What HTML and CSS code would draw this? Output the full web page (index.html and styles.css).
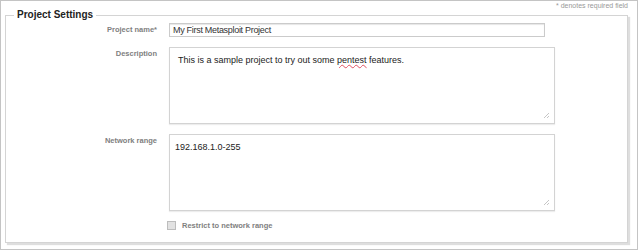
FILE: index.html
```html
<!DOCTYPE html>
<html lang="en">
<head>
    <meta charset="UTF-8">
    <title>Project Settings</title>
    <link rel="stylesheet" href="styles.css">
</head>
<body>
    <div class="frame">
        <p class="note">* denotes required field</p>
        <fieldset class="settings">
            <legend>Project Settings</legend>
            <div class="form-grid">
                <label class="field-label" for="project-name">Project name*</label>
                <div class="field">
                    <input class="text-input" id="project-name" type="text" value="My First Metasploit Project">
                </div>

                <label class="field-label">Description</label>
                <div class="field">
                    <div class="textbox textbox-desc" role="textbox">This is a sample project to try out some <span class="misspelt">pentest</span> features.</div>
                </div>

                <label class="field-label">Network range</label>
                <div class="field">
                    <div class="textbox" role="textbox">192.168.1.0-255</div>
                </div>

                <div class="field check-field">
                    <label class="check-row"><input class="check" type="checkbox"> Restrict to network range</label>
                </div>
            </div>
        </fieldset>
    </div>
</body>
</html>
```

FILE: styles.css
```css
*{
    margin: 0;
    padding: 0;
    box-sizing: border-box;
}
body {
    font-family: "Liberation Sans", Arial, sans-serif;
    background: #fff;
}
.frame {
    width: 638px;
    height: 250px;
    border: 1px solid #c4c4c4;
    padding: 0 9px 0 4px;
}
.note {
    height: 9px;
    font-size: 7px;
    line-height: 9px;
    color: #999;
    text-align: right;
}
.settings {
    min-width: 0;
    border: 1px solid #d4d4d4;
    box-shadow: 2px 2px 1px #dedede;
    padding: 3px 72px 12px 0;
}
.settings legend {
    margin-left: 8px;
    padding: 0 3px;
    font-size: 10px;
    line-height: 10px;
    font-weight: bold;
    color: #222;
}
.form-grid {
    display: grid;
    grid-template-columns: 151px 1fr;
    column-gap: 12px;
    row-gap: 10px;
}
.field-label {
    padding-top: 2px;
    font-size: 7.5px;
    line-height: 10px;
    font-weight: bold;
    color: #808080;
    text-align: right;
}
.text-input {
    display: block;
    width: calc(100% - 10px);
    height: 14px;
    padding: 0 3px;
    border: 1px solid #cbcbcb;
    box-shadow: inset 0 1px 1px #e6e6e6;
    font-family: "Liberation Sans", Arial, sans-serif;
    font-size: 9px;
    letter-spacing: -0.3px;
    color: #333;
    outline: none;
}
.textbox {
    position: relative;
    height: 77px;
    padding: 7px 5px;
    border: 1px solid #d3d3d3;
    box-shadow: 0 1px 1px #ededed;
    font-size: 9px;
    line-height: 11px;
    color: #222;
}
.textbox-desc {
    padding-left: 8px;
}
.textbox::after {
    content: "";
    position: absolute;
    right: 5px;
    bottom: 5px;
    width: 5px;
    height: 5px;
    background: linear-gradient(135deg, transparent 45%, #c6c6c6 45%, #c6c6c6 58%, transparent 58%, transparent 72%, #c6c6c6 72%, #c6c6c6 86%, transparent 86%);
}
.misspelt {
    text-decoration: underline wavy #e05060;
    text-decoration-thickness: 0.5px;
    text-underline-offset: 1px;
}
.check-field {
    grid-column: 2;
    margin-top: -1px;
}
.check-row {
    display: flex;
    align-items: center;
    gap: 6px;
    height: 10px;
    margin-left: -2px;
    font-size: 7.5px;
    font-weight: bold;
    color: #808080;
}
.check {
    appearance: none;
    width: 9px;
    height: 9px;
    border: 1px solid #bdbdbd;
    background: #e2e2e2;
}
```
